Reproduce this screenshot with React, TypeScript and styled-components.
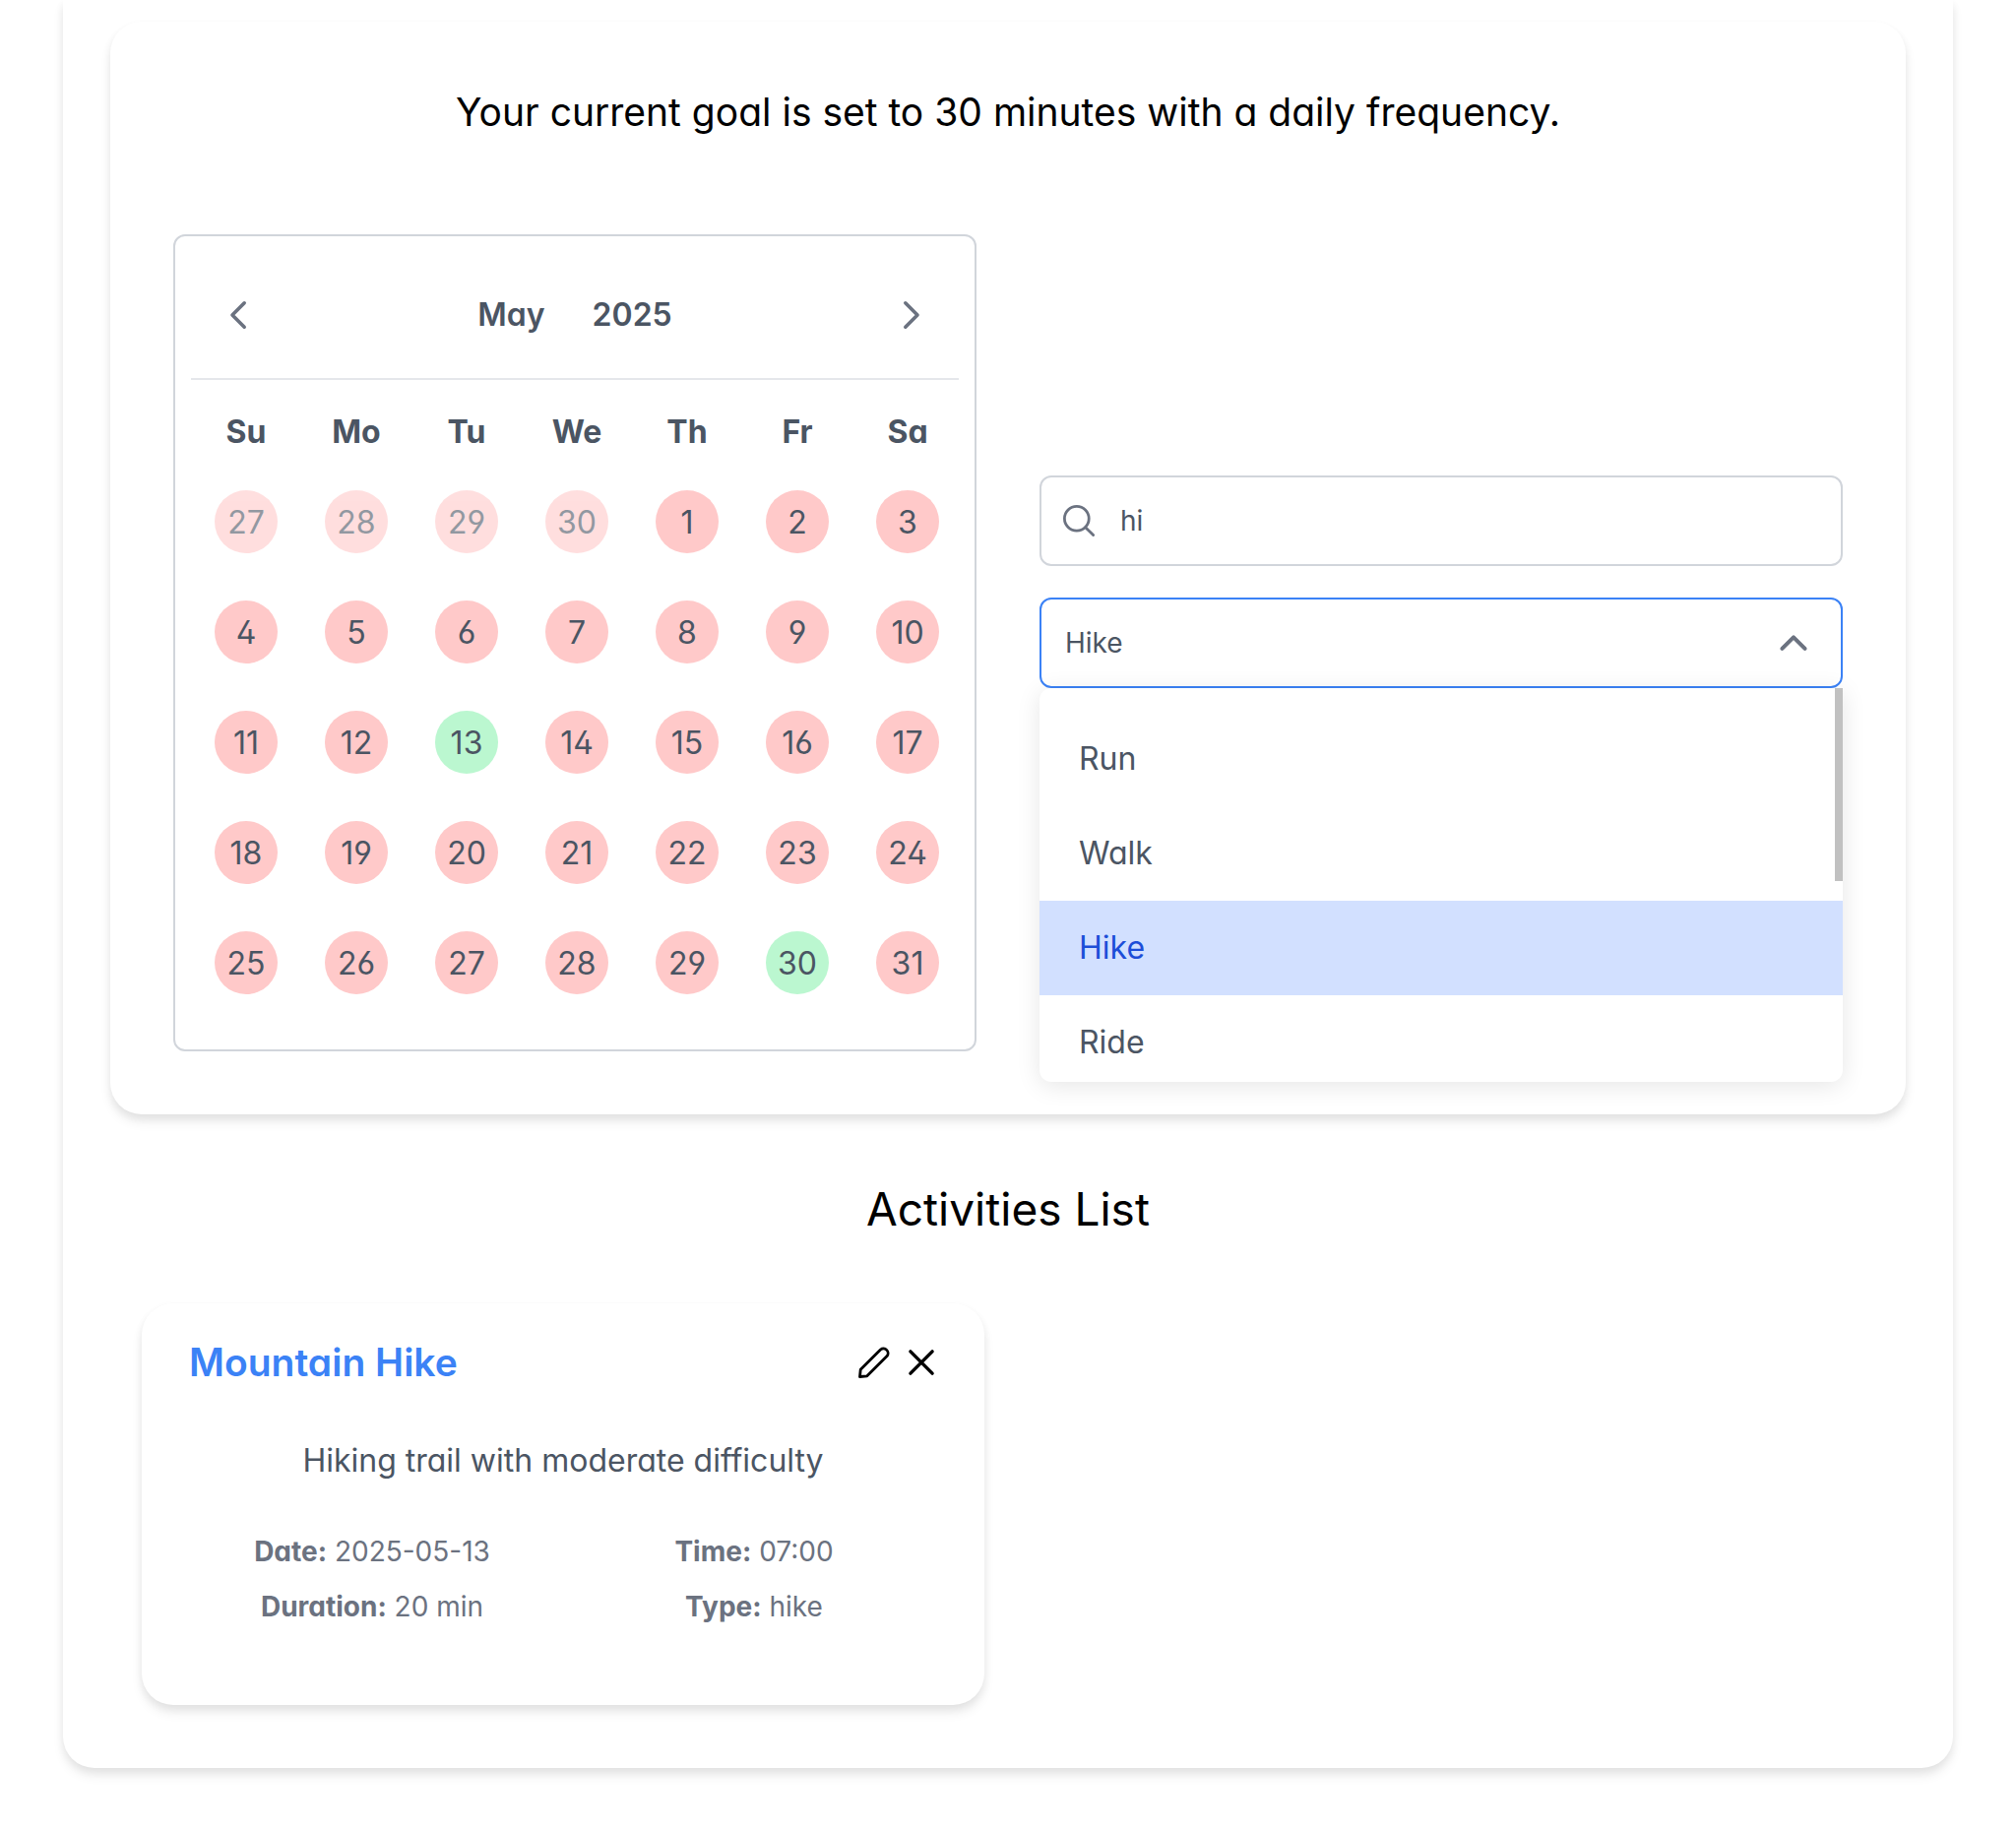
import React, { useState } from "react";
import styled, { createGlobalStyle } from "styled-components";

const GlobalStyle = createGlobalStyle`
  *, *::before, *::after { box-sizing: border-box; }
  body {
    margin: 0;
    background: #fff;
    color: #000;
    font-family: "Inter", "Liberation Sans", sans-serif;
    font-feature-settings: "cv02", "cv03", "cv04", "cv11";
    -webkit-font-smoothing: antialiased;
  }
  h1, h2, h3, p, ul, dl, dd { margin: 0; padding: 0; }
  button, input, select { font: inherit; font-feature-settings: inherit; }
`;

const cardShadow = "0 8px 12px rgba(0, 0, 0, 0.07), 0 4px 8px rgba(0, 0, 0, 0.06)";

const Page = styled.main`
  padding: 0 64px 64px;
`;

const Panel = styled.div`
  padding: 22px 48px 64px;
  border-radius: 0 0 32px 32px;
  background: #fff;
  box-shadow: ${cardShadow};
`;

const GoalCard = styled.section`
  padding: 64px;
  border-radius: 32px;
  background: #fff;
  box-shadow: ${cardShadow};
`;

const GoalText = styled.h1`
  margin-bottom: 96px;
  font-size: 39px;
  line-height: 56px;
  font-weight: 400;
  text-align: center;
`;

const Columns = styled.div`
  display: grid;
  grid-template-columns: minmax(0, 1fr) minmax(0, 1fr);
  gap: 64px;
`;

const CalendarBox = styled.div`
  padding: 16px;
  border: 2px solid #d1d5db;
  border-radius: 12px;
  color: #4b5563;
  font-size: 32px;
`;

const CalendarHeader = styled.div`
  display: flex;
  align-items: center;
  justify-content: space-between;
  padding: 32px 16px;
  border-bottom: 2px solid #e5e7eb;
  margin-bottom: 16px;
`;

const IconButton = styled.button<{ $size: number; $color: string }>`
  display: flex;
  align-items: center;
  justify-content: center;
  width: ${(p) => p.$size}px;
  height: ${(p) => p.$size}px;
  padding: 0;
  border: 0;
  background: none;
  color: ${(p) => p.$color};
  cursor: pointer;
`;

const CalendarTitle = styled.div`
  display: flex;
  gap: 16px;
`;

const TitleButton = styled.button`
  padding: 0 16px;
  border: 0;
  background: none;
  color: inherit;
  font-weight: 600;
  line-height: 64px;
  cursor: pointer;
`;

const DayTable = styled.table`
  width: 100%;
  margin-bottom: 16px;
  border-collapse: collapse;
`;

const DayName = styled.th`
  height: 72px;
  padding: 0;
  font-weight: 700;
  text-align: center;
`;

const DayCell = styled.td`
  padding: 24px;
`;

const Day = styled.span<{ $met: boolean; $outside: boolean }>`
  display: flex;
  align-items: center;
  justify-content: center;
  width: 64px;
  height: 64px;
  margin: 0 auto;
  border-radius: 50%;
  background: ${(p) => (p.$met ? "#bbf7d0" : "#ffc9c9")};
  opacity: ${(p) => (p.$outside ? 0.6 : 1)};
`;

/* The bottom padding keeps room for the open list under the last field. */
const Filters = styled.div`
  display: flex;
  flex-direction: column;
  justify-content: center;
  gap: 32px;
  padding-bottom: 124px;
`;

const Field = styled.div`
  position: relative;
  color: #6b7280;
`;

const FieldIcon = styled.span<{ $side: "left" | "right" }>`
  position: absolute;
  top: 0;
  bottom: 0;
  ${(p) => (p.$side === "left" ? "left: 24px;" : "right: 34px;")}
  display: flex;
  align-items: center;
  pointer-events: none;
`;

const SearchInput = styled.input`
  display: block;
  width: 100%;
  height: 92px;
  padding: 0 24px 0 80px;
  border: 2px solid #d1d5db;
  border-radius: 12px;
  outline: 0;
  background: #fff;
  color: #4b5563;
  font-size: 28px;
`;

const TypeSelect = styled.select`
  display: block;
  width: 100%;
  height: 92px;
  padding: 0 96px 0 24px;
  border: 2px solid #3b82f6;
  border-radius: 12px;
  outline: 0;
  appearance: none;
  background: #fff;
  color: #4b5563;
  font-size: 28px;
`;

const Menu = styled.div`
  position: absolute;
  top: 100%;
  left: 0;
  right: 0;
  height: 400px;
  overflow: hidden;
  border-radius: 12px 0 12px 12px;
  background: #fff;
  box-shadow: 0 4px 24px rgba(0, 0, 0, 0.1);
`;

const MenuList = styled.ul`
  padding: 24px 0;
  list-style: none;
`;

const MenuItem = styled.li<{ $active: boolean }>`
  padding: 24px 40px;
  background: ${(p) => (p.$active ? "#d2e0ff" : "transparent")};
  color: ${(p) => (p.$active ? "#1d4ed8" : "#4b5563")};
  font-size: 32px;
  line-height: 48px;
`;

const ScrollThumb = styled.div`
  position: absolute;
  top: 0;
  right: 0;
  width: 8px;
  height: 196px;
  background: #c1c1c1;
`;

const ListTitle = styled.h2`
  padding: 64px 0;
  font-size: 46px;
  line-height: 64px;
  font-weight: 400;
  text-align: center;
`;

const Activities = styled.div`
  display: grid;
  grid-template-columns: repeat(2, minmax(0, 1fr));
  gap: 48px;
  padding: 0 32px;
`;

const ActivityCard = styled.article`
  padding: 32px 48px 80px;
  border-radius: 32px;
  background: #fff;
  box-shadow: ${cardShadow};
`;

const ActivityHead = styled.header`
  display: flex;
  align-items: center;
  justify-content: space-between;
  margin-bottom: 48px;
`;

const ActivityName = styled.h3`
  color: #3b82f6;
  font-size: 39px;
  line-height: 56px;
  font-weight: 600;
`;

const Actions = styled.div`
  display: flex;
  gap: 16px;
`;

const Description = styled.p`
  margin-bottom: 48px;
  color: #4b5563;
  font-size: 32px;
  line-height: 48px;
  text-align: center;
`;

const Facts = styled.div`
  display: grid;
  grid-template-columns: repeat(2, minmax(0, 1fr));
  gap: 16px;
  color: #6b7280;
  font-size: 28px;
  line-height: 40px;
  text-align: center;
`;

const Svg = ({ width, children }: { width: number; children: React.ReactNode }) => (
  <svg
    width="32"
    height="32"
    viewBox="0 0 32 32"
    fill="none"
    stroke="currentColor"
    strokeWidth={width}
    strokeLinecap="round"
    strokeLinejoin="round"
    aria-hidden="true"
  >
    {children}
  </svg>
);

const ChevronLeft = () => <Svg width={3.6}><path d="M22.2 3.8 10 16l12.2 12.2" /></Svg>;
const ChevronRight = () => <Svg width={3.6}><path d="M9.8 3.8 22 16 9.8 28.2" /></Svg>;
const ChevronUp = () => <Svg width={4}><path d="M4.4 21.9 16 10.3l11.6 11.6" /></Svg>;
const Search = () => (
  <Svg width={2.8}>
    <circle cx="13.8" cy="13.8" r="12.4" />
    <path d="m22.7 22.7 7.9 7.9" />
  </Svg>
);
const Pencil = () => (
  <Svg width={2.8}>
    <path d="M1.5 30.5 2.2 23.3 22.5 3A4.7 4.7 0 0 1 29.1 9.6L8.8 29.8Z" />
  </Svg>
);
const Times = () => <Svg width={3.4}><path d="M4.9 4.9 27.1 27.1M27.1 4.9 4.9 27.1" /></Svg>;

const dayNames = ["Su", "Mo", "Tu", "We", "Th", "Fr", "Sa"];
const goalMet = [13, 30];

type CalendarDay = { day: number; outside: boolean };

const days: CalendarDay[] = [
  ...[27, 28, 29, 30].map((day) => ({ day, outside: true })),
  ...Array.from({ length: 31 }, (_, i) => ({ day: i + 1, outside: false })),
];
const weeks = Array.from({ length: 5 }, (_, w) => days.slice(w * 7, w * 7 + 7));

const activityTypes = ["Run", "Walk", "Hike", "Ride"];

const activities = [
  {
    name: "Mountain Hike",
    description: "Hiking trail with moderate difficulty",
    facts: [
      ["Date", "2025-05-13"],
      ["Time", "07:00"],
      ["Duration", "20 min"],
      ["Type", "hike"],
    ],
  },
];

const Calendar = () => (
  <CalendarBox>
    <CalendarHeader>
      <IconButton $size={64} $color="#6b7280" aria-label="Previous month">
        <ChevronLeft />
      </IconButton>
      <CalendarTitle>
        <TitleButton>May</TitleButton>
        <TitleButton>2025</TitleButton>
      </CalendarTitle>
      <IconButton $size={64} $color="#6b7280" aria-label="Next month">
        <ChevronRight />
      </IconButton>
    </CalendarHeader>
    <DayTable>
      <thead>
        <tr>
          {dayNames.map((name) => (
            <DayName key={name} scope="col">{name}</DayName>
          ))}
        </tr>
      </thead>
      <tbody>
        {weeks.map((week, i) => (
          <tr key={i}>
            {week.map(({ day, outside }) => (
              <DayCell key={day}>
                <Day $outside={outside} $met={!outside && goalMet.includes(day)}>{day}</Day>
              </DayCell>
            ))}
          </tr>
        ))}
      </tbody>
    </DayTable>
  </CalendarBox>
);

export default function App() {
  const [query, setQuery] = useState("hi");
  const [type, setType] = useState("Hike");

  return (
    <>
      <GlobalStyle />
      <Page>
        <Panel>
          <GoalCard>
            <GoalText>Your current goal is set to 30 minutes with a daily frequency.</GoalText>
            <Columns>
              <Calendar />
              <Filters>
                <Field>
                  <FieldIcon $side="left"><Search /></FieldIcon>
                  <SearchInput
                    type="text"
                    aria-label="Search activities"
                    value={query}
                    onChange={(e) => setQuery(e.target.value)}
                  />
                </Field>
                <Field>
                  <TypeSelect
                    aria-label="Activity type"
                    value={type}
                    onChange={(e) => setType(e.target.value)}
                  >
                    {activityTypes.map((t) => (
                      <option key={t}>{t}</option>
                    ))}
                  </TypeSelect>
                  <FieldIcon $side="right"><ChevronUp /></FieldIcon>
                  <Menu>
                    <MenuList role="listbox" aria-label="Activity types">
                      {activityTypes.map((t) => (
                        <MenuItem
                          key={t}
                          role="option"
                          aria-selected={t === type}
                          $active={t === type}
                          onClick={() => setType(t)}
                        >
                          {t}
                        </MenuItem>
                      ))}
                    </MenuList>
                    <ScrollThumb />
                  </Menu>
                </Field>
              </Filters>
            </Columns>
          </GoalCard>

          <ListTitle>Activities List</ListTitle>
          <Activities>
            {activities.map((activity) => (
              <ActivityCard key={activity.name}>
                <ActivityHead>
                  <ActivityName>{activity.name}</ActivityName>
                  <Actions>
                    <IconButton $size={32} $color="#000" aria-label="Edit activity">
                      <Pencil />
                    </IconButton>
                    <IconButton $size={32} $color="#000" aria-label="Delete activity">
                      <Times />
                    </IconButton>
                  </Actions>
                </ActivityHead>
                <Description>{activity.description}</Description>
                <Facts>
                  {activity.facts.map(([label, value]) => (
                    <p key={label}>
                      <strong>{label}:</strong> {value}
                    </p>
                  ))}
                </Facts>
              </ActivityCard>
            ))}
          </Activities>
        </Panel>
      </Page>
    </>
  );
}
